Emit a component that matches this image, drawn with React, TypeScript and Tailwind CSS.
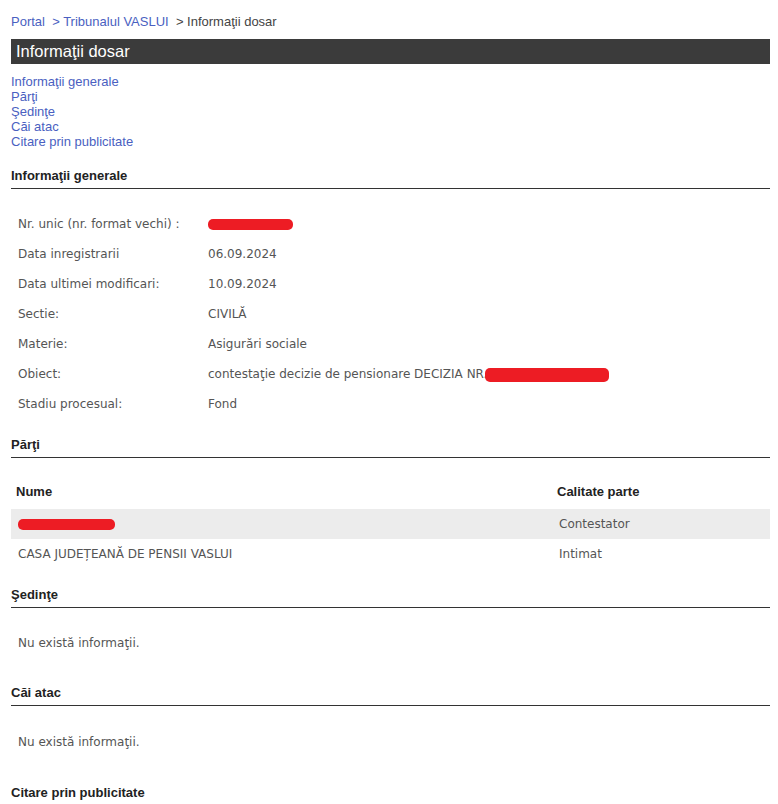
import React from 'react';

const Redacted: React.FC<{ w: number; h?: number }> = ({ w, h = 11 }) => (
  <span
    className="inline-block align-middle rounded-[5px] bg-[#ed1c24]"
    style={{ width: w, height: h }}
  />
);

const SectionTitle: React.FC<{ children: React.ReactNode; className?: string }> = ({ children, className }) => (
  <h2 className={`text-[13px] leading-[16px] font-bold text-[#222] pb-[4px] border-b border-[#333] ${className ?? ''}`}>
    {children}
  </h2>
);

const generale: [string, React.ReactNode][] = [
  ['Nr. unic (nr. format vechi) :', <Redacted w={85} />],
  ['Data inregistrarii', '06.09.2024'],
  ['Data ultimei modificari:', '10.09.2024'],
  ['Sectie:', 'CIVILĂ'],
  ['Materie:', 'Asigurări sociale'],
  [
    'Obiect:',
    <span className="inline-flex items-center">
      contestaţie decizie de pensionare DECIZIA NR.
      <span className="-ml-[2px]"><Redacted w={124} h={14} /></span>
    </span>,
  ],
  ['Stadiu procesual:', 'Fond'],
];

const dataFont = "font-['DejaVu_Sans',sans-serif] text-[12px] text-[#555]";

const App: React.FC = () => {
  return (
    <div className="min-h-screen bg-white pl-[11px] pr-[8px] font-['Liberation_Sans',Arial,sans-serif]">
      <div className="pt-[14px] text-[13px] leading-[16px]">
        <a className="text-[#4a5fc1]">Portal</a>
        <span className="text-[#4a5fc1]">&nbsp; &gt; Tribunalul VASLUI</span>
        <span className="text-[#444]">&nbsp; &gt; Informaţii dosar</span>
      </div>

      <div className="mt-[9px] h-[25px] bg-[#3b3b3b] pl-[5px] flex items-center">
        <span className="text-white text-[16.5px]">Informaţii dosar</span>
      </div>

      <nav className="mt-[10px] flex flex-col text-[13px] leading-[15px] text-[#4a5fc1]">
        <a>Informaţii generale</a>
        <a>Părţi</a>
        <a>Şedinţe</a>
        <a>Căi atac</a>
        <a>Citare prin publicitate</a>
      </nav>

      <SectionTitle className="mt-[19px]">Informaţii generale</SectionTitle>
      <div className={`mt-[20px] ${dataFont}`}>
        {generale.map(([label, value]) => (
          <div key={label} className="flex h-[30px] items-center">
            <div className="w-[197px] pl-[7px] shrink-0">{label}</div>
            <div>{value}</div>
          </div>
        ))}
      </div>

      <SectionTitle className="mt-[18px]">Părţi</SectionTitle>
      <div className="mt-[21px]">
        <div className="flex h-[30px] items-center pb-[4px] text-[13px] font-bold text-[#222]">
          <div className="w-[541px] pl-[5px]">Nume</div>
          <div className="pl-[5px]">Calitate parte</div>
        </div>
        <div className={`flex h-[30px] items-center bg-[#ececec] ${dataFont}`}>
          <div className="w-[541px] pl-[7px]"><Redacted w={97} /></div>
          <div className="pl-[7px]">Contestator</div>
        </div>
        <div className={`flex h-[30px] items-center ${dataFont}`}>
          <div className="w-[541px] pl-[7px]">CASA JUDEȚEANĂ DE PENSII VASLUI</div>
          <div className="pl-[7px]">Intimat</div>
        </div>
      </div>

      <SectionTitle className="mt-[18px]">Şedinţe</SectionTitle>
      <div className={`mt-[20px] h-[30px] flex items-center pl-[7px] ${dataFont}`}>Nu există informaţii.</div>

      <SectionTitle className="mt-[27px]">Căi atac</SectionTitle>
      <div className={`mt-[21px] h-[30px] flex items-center pl-[7px] ${dataFont}`}>Nu există informaţii.</div>

      <SectionTitle className="mt-[28px]">Citare prin publicitate</SectionTitle>
    </div>
  );
};

export default App;
